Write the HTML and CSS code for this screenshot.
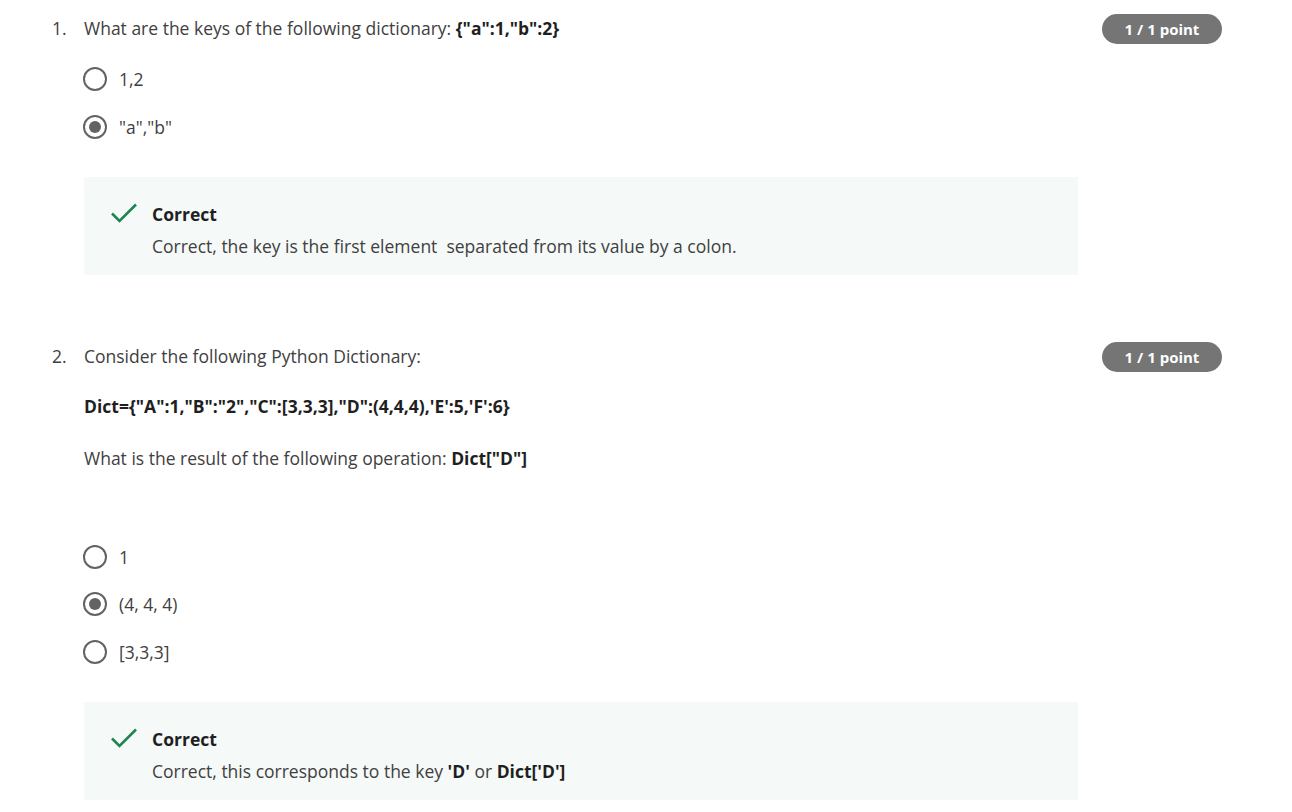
FILE: index.html
```
<!DOCTYPE html>
<html lang="en">
<head>
<meta charset="utf-8">
<title>Quiz</title>
<link rel="stylesheet" href="styles.css">
</head>
<body>
<div class="page">
  <section class="question q1">
    <div class="num">1.</div>
    <div class="body">
      <div class="prompt">What are the keys of the following dictionary: <b>{"a":1,"b":2}</b></div>
      <div class="options">
        <div class="option"><span class="radio"></span><span class="label">1,2</span></div>
        <div class="option"><span class="radio checked"></span><span class="label">"a","b"</span></div>
      </div>
      <div class="feedback">
        <svg class="check" width="28" height="20" viewBox="0 0 28 20"><path d="M2 10.5 L9.5 18 L26 1.5" fill="none" stroke="#1f8354" stroke-width="2.6"/></svg>
        <div class="fb-text">
          <div class="fb-title">Correct</div>
          <div class="fb-msg">Correct, the key is the first element&nbsp; separated from its value by a colon.</div>
        </div>
      </div>
    </div>
    <div class="badge">1 / 1 point</div>
  </section>

  <section class="question q2">
    <div class="num">2.</div>
    <div class="body">
      <div class="prompt">Consider the following Python Dictionary:</div>
      <div class="prompt para"><b>Dict={"A":1,"B":"2","C":[3,3,3],"D":(4,4,4),'E':5,'F':6}</b></div>
      <div class="prompt para second">What is the result of the following operation: <b>Dict["D"]</b></div>
      <div class="options spaced">
        <div class="option"><span class="radio"></span><span class="label">1</span></div>
        <div class="option"><span class="radio checked"></span><span class="label">(4, 4, 4)</span></div>
        <div class="option"><span class="radio"></span><span class="label">[3,3,3]</span></div>
      </div>
      <div class="feedback">
        <svg class="check" width="28" height="20" viewBox="0 0 28 20"><path d="M2 10.5 L9.5 18 L26 1.5" fill="none" stroke="#1f8354" stroke-width="2.6"/></svg>
        <div class="fb-text">
          <div class="fb-title">Correct</div>
          <div class="fb-msg">Correct, this corresponds to the key <b>'D'</b> or <b>Dict['D']</b></div>
        </div>
      </div>
    </div>
    <div class="badge">1 / 1 point</div>
  </section>
</div>
</body>
</html>
```
FILE: styles.css
```
html, body {
  margin: 0;
  padding: 0;
  background: #ffffff;
}
body {
  font-family: "Open Sans", "Liberation Sans", sans-serif;
  font-size: 17.5px;
  line-height: 24px;
  color: #404040;
}
b {
  font-weight: 700;
  color: #1f1f1f;
}
.page {
  padding: 16px 0 0 52px;
}
.question {
  display: grid;
  grid-template-columns: 32px 994px 120px;
  column-gap: 0;
  align-items: start;
}
.q2 {
  margin-top: 69px;
}
.num {
  color: #404040;
}
.badge {
  margin-left: 24px;
  margin-top: -2px;
  width: 120px;
  height: 30px;
  border-radius: 15px;
  background: #757575;
  color: #ffffff;
  font-weight: 700;
  font-size: 15px;
  line-height: 30px;
  text-align: center;
}
.para {
  margin-top: 26px;
}
.para.second {
  margin-top: 28px;
}
.options {
  margin-top: 15px;
  display: flex;
  flex-direction: column;
}
.options.spaced {
  margin-top: 63px;
}
.option {
  height: 48px;
  display: flex;
  align-items: center;
  gap: 12px;
}
.spaced .option {
  height: 47.5px;
}
.radio {
  box-sizing: border-box;
  width: 24px;
  height: 24px;
  margin-left: -1px;
  border: 2.5px solid #636363;
  border-radius: 50%;
  display: flex;
  align-items: center;
  justify-content: center;
}
.radio.checked::after {
  content: "";
  width: 12px;
  height: 12px;
  border-radius: 50%;
  background: #636363;
}
.label {
  color: #404040;
}
.feedback {
  margin-top: 26px;
  background: #f5f9f8;
  padding: 25px 0 17px 26px;
  display: flex;
  gap: 14px;
  align-items: flex-start;
}
.check {
  display: block;
  margin-top: 1px;
  flex: none;
}
.fb-title {
  font-weight: 700;
  color: #1f1f1f;
}
.fb-msg {
  margin-top: 8px;
}
```
